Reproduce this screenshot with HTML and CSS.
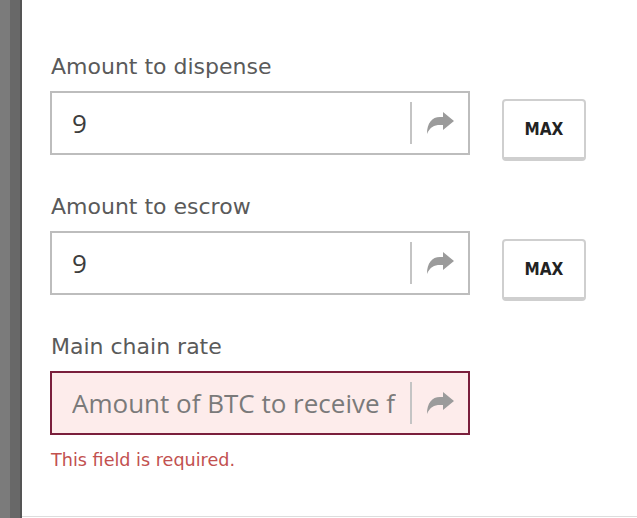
FILE: index.html
```html
<!DOCTYPE html>
<html lang="en">
  <head>
    <meta charset="UTF-8" />
    <meta name="viewport" content="width=device-width, initial-scale=1.0" />
    <title>Dispenser</title>
    <link rel="stylesheet" href="styles.css">
  </head>
  <body>
    <div class="page">
      <div class="sidebar"></div>
      <div class="panel">
        <div class="field">
          <label for="dispense">Amount to dispense</label>
          <div class="row">
            <div class="input-box">
              <input type="text" id="dispense" value="9" />
              <span class="addon">
                <svg viewBox="0 0 30 24" width="30" height="24"><path d="M18 1 L29 10 L18 19 L18 14 L15 14 C9 14 5 16 2 23 C2 12 7 6 15 6 L18 6 Z" /></svg>
              </span>
            </div>
            <button class="max-btn">MAX</button>
          </div>
        </div>

        <div class="field">
          <label for="escrow">Amount to escrow</label>
          <div class="row">
            <div class="input-box">
              <input type="text" id="escrow" value="9" />
              <span class="addon">
                <svg viewBox="0 0 30 24" width="30" height="24"><path d="M18 1 L29 10 L18 19 L18 14 L15 14 C9 14 5 16 2 23 C2 12 7 6 15 6 L18 6 Z" /></svg>
              </span>
            </div>
            <button class="max-btn">MAX</button>
          </div>
        </div>

        <div class="field">
          <label for="rate">Main chain rate</label>
          <div class="row">
            <div class="input-box invalid">
              <input type="text" id="rate" placeholder="Amount of BTC to receive for each unit" />
              <span class="addon">
                <svg viewBox="0 0 30 24" width="30" height="24"><path d="M18 1 L29 10 L18 19 L18 14 L15 14 C9 14 5 16 2 23 C2 12 7 6 15 6 L18 6 Z" /></svg>
              </span>
            </div>
          </div>
          <p class="error">This field is required.</p>
        </div>
      </div>
    </div>
  </body>
</html>
```

FILE: styles.css
```css
body {
  margin: 0;
  font-family: "DejaVu Sans", sans-serif;
  background: #fff;
}
.page {
  display: flex;
  height: 518px;
}
.sidebar {
  width: 22px;
  background: linear-gradient(to right, #7b7b7b 0 10px, #686868 10px 20px, #555 20px 22px);
}
.panel {
  flex: 1;
  height: 517px;
  box-sizing: border-box;
  padding: 54px 0 0 28px;
  border-bottom: 1px solid #ddd;
}

/* Campos */
.field {
  margin-bottom: 33px;
}
.field label {
  display: block;
  font-size: 22px;
  line-height: 26px;
  color: #5a5a5a;
  margin: 0 0 11px 1px;
}
.row {
  display: flex;
  align-items: flex-start;
}
.input-box {
  width: 420px;
  height: 64px;
  box-sizing: border-box;
  display: flex;
  align-items: center;
  border: 2px solid #bdbdbd;
  background: #fff;
}
.input-box input {
  flex: 1;
  min-width: 0;
  height: 100%;
  border: none;
  outline: none;
  background: transparent;
  padding: 0 14px 0 20px;
  font-family: "Open Sans", sans-serif;
  font-size: 26px;
  color: #3c3c3c;
}
.input-box input::placeholder {
  color: #7a7a7a;
}
.addon {
  width: 56px;
  height: 42px;
  border-left: 2px solid #c4c4c4;
  display: flex;
  align-items: center;
  justify-content: center;
}
.addon svg {
  fill: #9b9b9b;
}
.input-box.invalid {
  border-color: #7a1f3c;
  background: #fdeceb;
}

/* Botón MAX */
.max-btn {
  width: 84px;
  height: 62px;
  margin: 8px 0 0 32px;
  border: 2px solid #cfcfcf;
  border-bottom-width: 4px;
  border-radius: 4px;
  background: #fff;
  font-family: "DejaVu Sans Condensed", "DejaVu Sans", sans-serif;
  font-weight: bold;
  font-size: 17px;
  color: #222;
  padding: 0;
}

.error {
  margin: 14px 0 0 1px;
  font-size: 17.6px;
  line-height: 22px;
  color: #c2514f;
}
```
